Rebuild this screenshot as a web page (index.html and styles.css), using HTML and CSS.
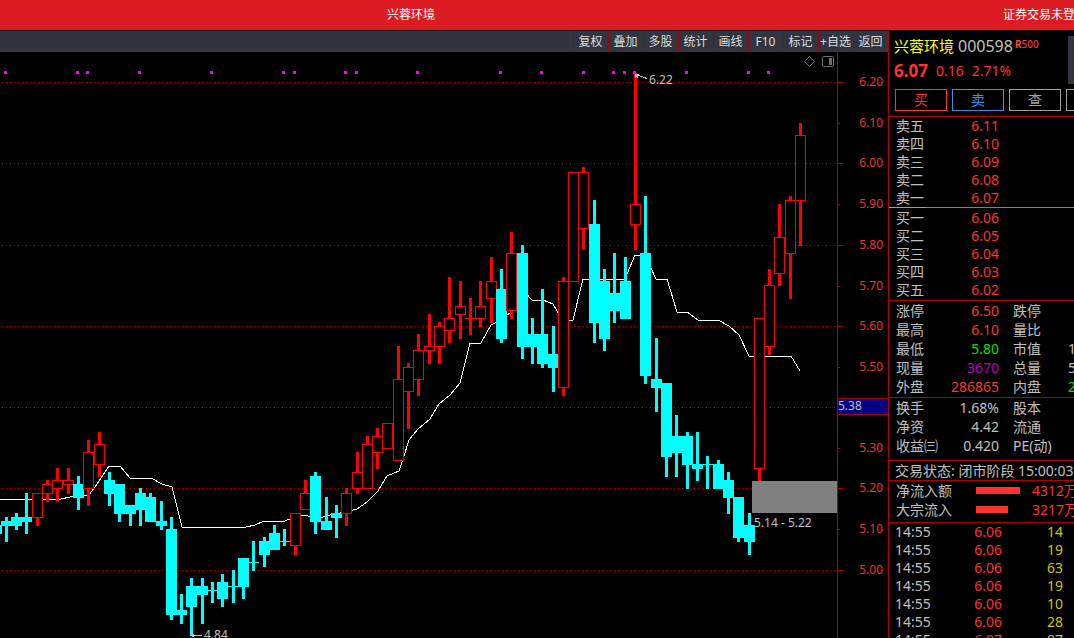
FILE: index.html
```html
<!DOCTYPE html>
<html lang="zh-CN">
<head>
<meta charset="utf-8">
<title>兴蓉环境</title>
<link rel="stylesheet" href="styles.css">
</head>
<body>
<header class="titlebar">
  <h1 class="title">兴蓉环境</h1>
  <span class="account">证券交易未登</span>
</header>
<main class="workspace">
  <section class="chart-pane">
    <nav class="toolbar">
      <button class="tool">复权</button>
      <button class="tool">叠加</button>
      <button class="tool">多股</button>
      <button class="tool">统计</button>
      <button class="tool">画线</button>
      <button class="tool">F10</button>
      <button class="tool">标记</button>
      <button class="tool">+自选</button>
      <button class="tool">返回</button>
    </nav>
    <div class="chart-box">
      <svg class="chart" viewBox="0 52 888 586" preserveAspectRatio="xMaxYMin slice" role="img" aria-label="K线图">
        <path class="grid" d="M2 82.5H837M2 163.5H837M2 245.5H837M2 326.5H837M2 407.5H837M2 488.5H837M2 570.5H837"/>
        <polyline class="average" points="0,499 61,499 70,497 80,495 89,495 95,487 109,466 120,466 130,478 151,478 162,484 172,487 182,527 246,527 255,525 264,521 285,521 292,518 302,515 308,516 319,518 330,515 345,512 357,509 367,502 378,491 387,476 399,471 403,459 409,440 418,429 430,419 439,404 450,395 460,383 470,343 481,343 491,325 501,320 511,312 522,289 532,300 543,300 553,304 560,316 568,320 573,320 583,279 625,279 635,255 645,255 656,279 667,279 677,312 687,312 698,320 718,320 729,326 739,335 749,356 791,356 800,371"/>
        <g id="candles"></g>
        <g id="markers" class="marker"></g>
        <rect class="gap-zone" x="752" y="481" width="85" height="32"/>
        <text class="note" x="754" y="527">5.14 - 5.22</text>
        <path class="arrow" d="M635.5 74.500L647 78.500M635.500 78V74.500H639M635.500 74.500L638 78"/>
        <text class="note" x="649" y="84">6.22</text>
        <path class="arrow" d="M191.500 635.500H202M194.500 633.500L191.500 635.500L194.500 637.500"/>
        <text class="note" x="204" y="639">4.84</text>
        <path class="axis" d="M837.500 52V638M838 82.500H843M838 123.500H840M838 163.500H843M838 204.500H840M838 245.500H843M838 286.500H840M838 326.500H843M838 367.500H840M838 448.500H840M838 488.500H843M838 529.500H840M838 570.500H843"/>
        <g id="scale" class="scale"></g>
        <rect class="cursor-price" x="838" y="399" width="50" height="15"/>
        <path class="axis" d="M838 398.500H888M838 414.500H888"/>
        <text class="cursor-text" x="838" y="410">5.38</text>
        <g class="view-icon">
          <path d="M809.500 56.500L814.500 61.500L809.500 66.500L804.500 61.500Z"/>
          <rect x="822.500" y="56.500" width="11" height="10" rx="1"/>
          <rect class="view-fill" x="829" y="58" width="3" height="7"/>
        </g>
      </svg>
    </div>
  </section>

  <aside class="quote">
    <div class="summary">
      <div class="summary-text">
        <div class="name-line"><span class="stock">兴蓉环境</span><span class="code">000598</span><span class="tag"><b>R</b>500</span></div>
        <div class="price-line"><b class="last">6.07</b><span>0.16</span><span>2.71%</span></div>
      </div>
      <div class="handle"></div>
    </div>
    <div class="actions">
      <button class="action buy">买</button>
      <button class="action sell">卖</button>
      <button class="action query">查</button>
      <button class="action query" aria-label="更多"></button>
    </div>
    <table class="book asks">
      <tr><th>卖五</th><td>6.11</td></tr>
      <tr><th>卖四</th><td>6.10</td></tr>
      <tr><th>卖三</th><td>6.09</td></tr>
      <tr><th>卖二</th><td>6.08</td></tr>
      <tr><th>卖一</th><td>6.07</td></tr>
    </table>
    <div class="divider"></div>
    <table class="book bids">
      <tr><th>买一</th><td>6.06</td></tr>
      <tr><th>买二</th><td>6.05</td></tr>
      <tr><th>买三</th><td>6.04</td></tr>
      <tr><th>买四</th><td>6.03</td></tr>
      <tr><th>买五</th><td>6.02</td></tr>
    </table>
    <div class="section figures">
      <dl class="row"><dt>涨停</dt><dd class="up">6.50</dd><dt>跌停</dt><dd></dd></dl>
      <dl class="row"><dt>最高</dt><dd class="up">6.10</dd><dt>量比</dt><dd></dd></dl>
      <dl class="row"><dt>最低</dt><dd class="down">5.80</dd><dt>市值</dt><dd>1</dd></dl>
      <dl class="row"><dt>现量</dt><dd class="volume">3670</dd><dt>总量</dt><dd>5</dd></dl>
      <dl class="row"><dt>外盘</dt><dd class="up">286865</dd><dt>内盘</dt><dd class="down">2</dd></dl>
    </div>
    <div class="section ratios">
      <dl class="row"><dt>换手</dt><dd>1.68%</dd><dt>股本</dt><dd></dd></dl>
      <dl class="row"><dt>净资</dt><dd>4.42</dd><dt>流通</dt><dd></dd></dl>
      <dl class="row"><dt>收益㈢</dt><dd>0.420</dd><dt>PE(动)</dt><dd></dd></dl>
    </div>
    <div class="section status">交易状态: 闭市阶段 15:00:03</div>
    <div class="section flows">
      <div class="flow"><span>净流入额</span><span class="bar" style="width:44px"></span><span class="up">4312万</span></div>
      <div class="flow"><span>大宗流入</span><span class="bar" style="width:32px"></span><span class="up">3217万</span></div>
    </div>
    <table class="ticks">
      <tr><td>14:55</td><td>6.06</td><td>14</td></tr>
      <tr><td>14:55</td><td>6.06</td><td>19</td></tr>
      <tr><td>14:55</td><td>6.06</td><td>63</td></tr>
      <tr><td>14:55</td><td>6.06</td><td>19</td></tr>
      <tr><td>14:55</td><td>6.06</td><td>10</td></tr>
      <tr><td>14:55</td><td>6.06</td><td>28</td></tr>
      <tr><td>14:55</td><td>6.07</td><td>97</td></tr>
    </table>
  </aside>
</main>
<script src="chart.js"></script>
</body>
</html>
```
FILE: styles.css
```css
* { box-sizing: border-box; }

body {
  margin: 0;
  height: 100vh;
  display: flex;
  flex-direction: column;
  overflow: hidden;
  background: #000;
  color: #c0c0c0;
  font-family: "Noto Sans", "Noto Sans CJK SC", sans-serif;
  font-size: 14px;
}

button {
  margin: 0;
  padding: 0;
  border: 0;
  background: none;
  font-family: inherit;
  white-space: nowrap;
}

.titlebar {
  flex: none;
  height: 31px;
  display: flex;
  align-items: center;
  justify-content: space-between;
  padding-left: 387px;
  border-bottom: 1px solid #181a20;
  background: #dc1c22;
  color: #fff;
  font-size: 12px;
  line-height: 32px;
  white-space: nowrap;
}

.title {
  margin: 0;
  font-size: 12px;
  font-weight: 400;
}

.account { width: 71px; }

.workspace {
  flex: 1;
  min-height: 0;
  display: flex;
}

.chart-pane {
  flex: 1;
  min-width: 0;
  display: flex;
  flex-direction: column;
}

.toolbar {
  flex: none;
  height: 21px;
  display: flex;
  justify-content: flex-end;
  border-bottom: 1px solid #b00000;
  background: #32343f;
}

.tool {
  width: 35px;
  padding: 1px 1px 0 0;
  border-left: 1px solid #a00008;
  color: #dcdcdc;
  font-size: 12px;
  line-height: 20px;
}

.chart-box {
  flex: 1;
  min-height: 0;
}

.chart {
  display: block;
  width: 100%;
  height: 100%;
  font-size: 12px;
  shape-rendering: crispEdges;
}

.grid { fill: none; stroke: #c00000; stroke-dasharray: 1 3; }
.average { fill: none; stroke: #fff; }
.rise-wick { fill: #f00; }
.rise-body { fill: #000; stroke: #f00; }
.fall { fill: #0ff; }
.marker { fill: #f0f; }
.gap-zone { fill: #808080; }
.note, .cursor-text { fill: #c0c0c0; }
.arrow { fill: none; stroke: #c0c0c0; }
.axis { fill: none; stroke: #b00000; }
.scale { fill: #f03232; text-anchor: end; }
.cursor-price { fill: #000080; }
.view-icon { fill: none; stroke: #707070; shape-rendering: auto; }
.view-icon .view-fill { fill: #707070; stroke: none; }

.quote {
  flex: none;
  width: 186px;
  border-left: 1px solid #b00000;
  overflow: hidden;
  white-space: nowrap;
}

.summary {
  display: flex;
  justify-content: space-between;
  height: 58px;
  padding: 5px 0 0 5px;
}

.name-line {
  display: flex;
  height: 20px;
  line-height: 20px;
}

.stock { width: 64px; color: #ff0; font-size: 15px; }
.code { width: 57px; font-size: 16px; }
.tag { color: #ff4646; font-size: 10px; line-height: 16px; }

.price-line {
  display: flex;
  gap: 8px;
  padding-top: 4px;
  color: #ff3232;
  line-height: 22px;
}

.last { font-size: 17px; }

.handle {
  width: 6px;
  height: 48px;
  background: #32343f;
}

.actions {
  display: flex;
  gap: 5px;
  height: 28px;
  padding-left: 6px;
  border-bottom: 1px solid #b00000;
}

.action {
  flex: none;
  width: 52px;
  height: 22px;
  border: 1px solid;
  font-size: 14px;
  line-height: 20px;
}

.buy { color: #ff3232; }
.sell { color: #4090e0; }
.query { color: #a0a0a0; }

.book, .ticks {
  table-layout: fixed;
  border-collapse: collapse;
  line-height: 18px;
}

.book { width: 110px; }
.book th, .book td, .ticks td { padding: 0; }
.book th { padding-left: 7px; font-weight: 400; text-align: left; }
.book td { color: #ff3232; text-align: right; }
.bids { margin: 1px 0; }

.divider {
  height: 1px;
  background: linear-gradient(to right, #d89828 37px, #4090e0 37px);
}

.section { border-top: 1px solid #b00000; }
.figures { padding-bottom: 1px; }
.ratios { padding-bottom: 5px; }

.row {
  display: grid;
  grid-template-columns: 48px 55px 56px 20px;
  margin: 0;
  padding-left: 7px;
  line-height: 19px;
}

.row dd { margin: 0; text-align: right; }
.row dt:nth-of-type(2) { padding-left: 14px; }
.row dd:last-child { padding-left: 13px; text-align: left; }

.up { color: #ff3232; }
.down { color: #00e000; }
.row .volume { color: #c000c0; }

.status { padding-left: 6px; line-height: 19px; }
.flows { padding-bottom: 3px; border-bottom: 1px solid #b00000; }

.flow {
  display: grid;
  grid-template-columns: 80px 56px 50px;
  align-items: center;
  padding-left: 7px;
  line-height: 19px;
}

.bar { height: 7px; background: #ff3232; }

.ticks { width: 174px; }
.ticks td { text-align: right; }
.ticks td:nth-child(1) { width: 50px; padding-left: 6px; text-align: left; }
.ticks td:nth-child(2) { width: 63px; color: #ff3232; }
.ticks td:nth-child(3) { color: #c8c800; }
```
FILE: chart.js
```javascript
const NS = "http://www.w3.org/2000/svg";

// Each candle: left edge of the wick, high, body top, body bottom, low, rising flag.
const candles = [
  [-5, 525, 525, 534, 534, 0], [5, 517, 521, 526, 542, 0], [15, 513, 517, 526, 530, 0],
  [25, 493, 517, 522, 534, 0], [36, 493, 493, 518, 526, 1], [46, 480, 484, 494, 502, 1],
  [56, 468, 480, 489, 502, 1], [67, 468, 480, 485, 494, 1], [77, 476, 484, 498, 510, 0],
  [87, 440, 452, 489, 506, 1], [98, 432, 444, 465, 477, 1], [108, 472, 480, 494, 506, 0],
  [118, 484, 484, 514, 522, 0], [129, 505, 505, 514, 526, 0], [139, 488, 493, 510, 526, 0],
  [149, 493, 497, 522, 522, 0], [160, 501, 521, 526, 530, 0], [170, 517, 529, 615, 620, 0],
  [180, 594, 610, 615, 624, 0], [190, 578, 586, 607, 636, 0], [201, 578, 586, 595, 624, 0],
  [211, 582, 590, 591, 603, 0], [221, 574, 582, 599, 607, 0], [232, 570, 586, 587, 603, 0],
  [242, 558, 558, 587, 599, 0], [252, 541, 562, 563, 571, 0], [263, 537, 541, 555, 567, 0],
  [273, 525, 533, 550, 550, 0], [283, 529, 541, 542, 546, 0], [294, 513, 513, 546, 555, 1],
  [304, 480, 493, 510, 510, 1], [314, 472, 476, 522, 534, 0], [325, 497, 521, 530, 530, 0],
  [335, 505, 513, 518, 538, 0], [345, 488, 493, 514, 526, 1], [356, 452, 472, 489, 494, 1],
  [366, 436, 444, 489, 489, 1], [376, 428, 436, 453, 469, 1], [386, 423, 423, 449, 449, 1],
  [397, 346, 379, 461, 461, 1], [407, 363, 367, 392, 429, 1], [417, 334, 350, 380, 396, 1],
  [428, 314, 346, 351, 364, 1], [438, 322, 326, 347, 364, 1], [448, 277, 318, 331, 343, 1],
  [459, 281, 306, 315, 339, 1], [469, 298, 318, 319, 335, 1], [479, 281, 306, 319, 327, 1],
  [490, 257, 281, 299, 323, 1], [500, 269, 289, 339, 343, 0], [510, 232, 253, 311, 319, 1],
  [521, 245, 253, 347, 359, 0], [531, 318, 334, 347, 364, 0], [541, 289, 334, 364, 368, 0],
  [552, 326, 354, 368, 392, 0], [562, 277, 281, 388, 396, 1], [572, 172, 172, 282, 282, 1],
  [582, 167, 172, 229, 250, 1], [593, 200, 224, 323, 343, 0], [603, 269, 281, 339, 351, 0],
  [613, 253, 293, 311, 323, 0], [624, 257, 281, 319, 319, 0], [634, 73, 204, 225, 250, 1],
  [644, 196, 253, 376, 384, 0], [655, 338, 379, 388, 412, 0], [665, 383, 383, 457, 477, 0],
  [675, 415, 436, 453, 477, 0], [686, 432, 436, 465, 489, 0], [696, 432, 464, 469, 481, 0],
  [706, 456, 464, 465, 489, 0], [717, 460, 464, 489, 489, 0], [727, 472, 480, 498, 514, 0],
  [737, 497, 497, 538, 542, 0], [748, 513, 525, 542, 555, 0], [758, 318, 318, 469, 481, 1],
  [768, 269, 285, 347, 355, 1], [778, 204, 237, 274, 286, 1], [789, 196, 200, 254, 299, 1],
  [799, 123, 135, 201, 246, 1]
];

const markers = [4, 76, 86, 138, 210, 282, 293, 344, 355, 416, 499, 540, 582, 612, 623, 633, 685, 747, 767];

const labels = [
  ["6.20", 82], ["6.10", 123], ["6.00", 163], ["5.90", 204], ["5.80", 245], ["5.70", 286],
  ["5.60", 326], ["5.50", 367], ["5.30", 448], ["5.20", 488], ["5.10", 529], ["5.00", 570]
];

function rect(parent, x, y, width, height, className) {
  if (height <= 0) return;
  const el = document.createElementNS(NS, "rect");
  Object.entries({ x, y, width, height }).forEach(([key, value]) => el.setAttribute(key, value));
  if (className) el.setAttribute("class", className);
  parent.appendChild(el);
}

const candleLayer = document.getElementById("candles");
candles.forEach(([x, high, top, bottom, low, rising]) => {
  const wick = rising ? "rise-wick" : "fall";
  rect(candleLayer, x, high, 3, top - high, wick);
  rect(candleLayer, x, bottom, 3, low - bottom, wick);
  if (rising && bottom - top > 1) {
    rect(candleLayer, x - 3.5, top + 0.5, 10, bottom - top - 1, "rise-body");
  } else {
    rect(candleLayer, x - 4, top, 11, bottom - top, wick);
  }
});

const markerLayer = document.getElementById("markers");
markers.forEach((x) => rect(markerLayer, x, 71, 3, 3));

const scaleLayer = document.getElementById("scale");
labels.forEach(([value, y]) => {
  const text = document.createElementNS(NS, "text");
  text.setAttribute("x", 883);
  text.setAttribute("y", y + 4);
  text.textContent = value;
  scaleLayer.appendChild(text);
});
```
